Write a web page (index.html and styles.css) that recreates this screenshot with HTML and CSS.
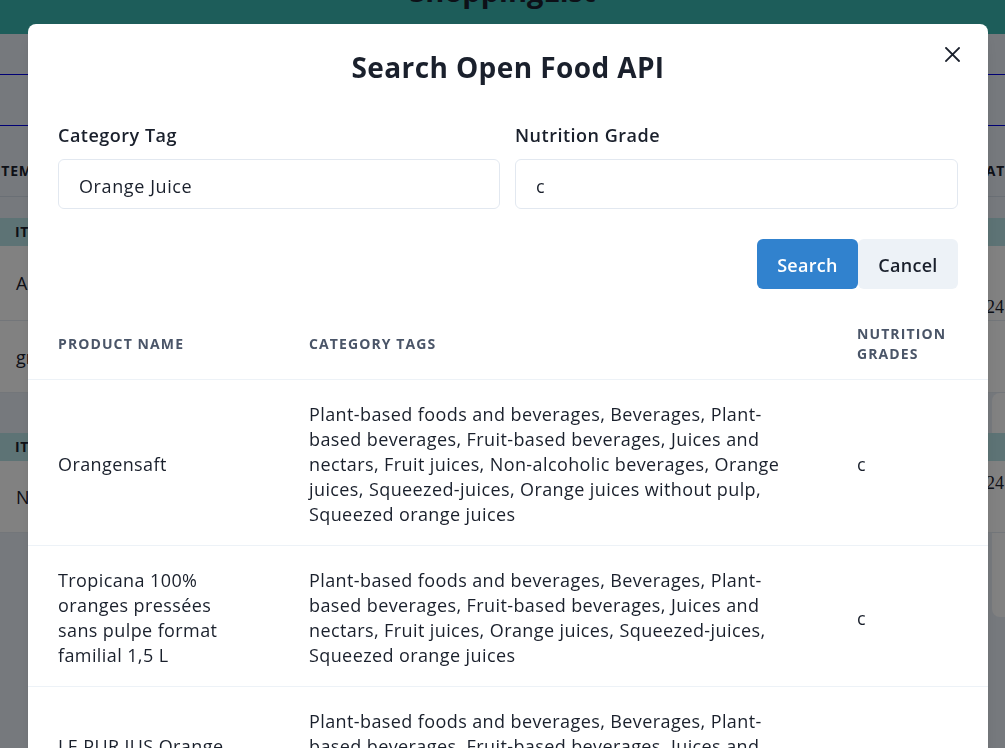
FILE: index.html
```html
<!DOCTYPE html>
<html lang="en">
<head>
<meta charset="utf-8">
<title>ShoppingList</title>
<link rel="stylesheet" href="styles.css">
</head>
<body>
<div class="page">
  <header class="topbar"><h1 class="brand">ShoppingList</h1></header>
  <div class="tabs"></div>
  <div class="toolbar"></div>
  <div class="side-card"></div>
  <div class="list">
    <div class="list-head"><span class="head-left">ITEM</span><span class="head-right">CREATED AT</span></div>
    <div class="group">
      <div class="group-title">ITEMS</div>
      <div class="row row-tall"><span>Apples</span><span class="date date-low">2024</span></div>
      <div class="row"><span>grapes</span><span class="date"></span></div>
    </div>
    <div class="group group-second">
      <div class="group-title">ITEMS</div>
      <div class="row"><span>Nuts</span><span class="date date-high">2024</span></div>
    </div>
  </div>
</div>

<div class="overlay"></div>

<section class="modal" role="dialog" aria-labelledby="modal-title">
  <header class="modal-header">
    <h2 class="modal-title" id="modal-title">Search Open Food API</h2>
    <button class="close" type="button" aria-label="Close">
      <svg width="15" height="15" viewBox="0 0 15 15" aria-hidden="true">
        <path d="M1 1 L14 14 M14 1 L1 14" stroke="#1a202c" stroke-width="1.8" stroke-linecap="square" fill="none"/>
      </svg>
    </button>
  </header>
  <div class="modal-body">
    <div class="fields">
      <div class="field">
        <label class="label" for="tag">Category Tag</label>
        <input class="input" id="tag" type="text" value="Orange Juice">
      </div>
      <div class="field">
        <label class="label" for="grade">Nutrition Grade</label>
        <input class="input" id="grade" type="text" value="c">
      </div>
    </div>
    <div class="actions">
      <button class="btn btn-primary" type="button">Search</button>
      <button class="btn btn-ghost" type="button">Cancel</button>
    </div>
  </div>
  <table class="results">
    <colgroup>
      <col class="c-name"><col class="c-tags"><col class="c-grade">
    </colgroup>
    <thead>
      <tr><th>Product Name</th><th>Category Tags</th><th>Nutrition Grades</th></tr>
    </thead>
    <tbody>
      <tr>
        <td>Orangensaft</td>
        <td>Plant-based foods and beverages, Beverages, Plant-based beverages, Fruit-based beverages, Juices and nectars, Fruit juices, Non-alcoholic beverages, Orange juices, Squeezed-juices, Orange juices without pulp, Squeezed orange juices</td>
        <td>c</td>
      </tr>
      <tr>
        <td>Tropicana 100% oranges pressées sans pulpe format familial 1,5 L</td>
        <td>Plant-based foods and beverages, Beverages, Plant-based beverages, Fruit-based beverages, Juices and nectars, Fruit juices, Orange juices, Squeezed-juices, Squeezed orange juices</td>
        <td>c</td>
      </tr>
      <tr>
        <td>LE PUR JUS Orange 100% pressé sans pulpe</td>
        <td>Plant-based foods and beverages, Beverages, Plant-based beverages, Fruit-based beverages, Juices and nectars, Fruit juices, Non-alcoholic beverages, Orange juices, Squeezed-juices, Orange juices without pulp, Squeezed orange juices</td>
        <td>c</td>
      </tr>
    </tbody>
  </table>
</section>
</body>
</html>
```

FILE: styles.css
```css
* { box-sizing: border-box; }

html, body {
  margin: 0;
  width: 1005px;
  height: 748px;
  overflow: hidden;
}

body {
  font-family: "Open Sans", "Noto Sans", sans-serif;
  color: #1a202c;
  background: #e2e8f0;
}

/* ---------- background page ---------- */
.page {
  position: relative;
  width: 1005px;
  height: 748px;
}

.topbar {
  height: 34px;
  background: #38b2ac;
  overflow: hidden;
  text-align: center;
}

.brand {
  margin: -29px 0 0;
  font-size: 29px;
  line-height: 40px;
  font-weight: 700;
  color: #1a202c;
}

.tabs {
  height: 41px;
  border-bottom: 1px solid #0000e0;
}

.toolbar {
  height: 51px;
  border-bottom: 1px solid #0000e0;
}

.list {
  position: relative;
  z-index: 1;
  width: 1030px;
}

.list-head {
  height: 71px;
  display: flex;
  justify-content: space-between;
  align-items: flex-end;
  padding: 0 0 16px;
  font-size: 14px;
  font-weight: 700;
  letter-spacing: 0.05em;
  color: #1a202c;
  border-bottom: 1px solid #cbd5e0;
}

.head-left { margin-left: -4px; }
.head-right { margin-right: 25px; }

.group { margin-top: 21px; }
.group-second { margin-top: 40px; }

.group-title {
  height: 28px;
  line-height: 28px;
  padding-left: 15px;
  background: #b2dde0;
  font-size: 14px;
  font-weight: 700;
  letter-spacing: 0.05em;
}

.row {
  height: 72px;
  display: flex;
  justify-content: space-between;
  align-items: center;
  padding-left: 16px;
  background: #f7f7f8;
  font-size: 18px;
  border-bottom: 1px solid #dde3ea;
}

.row-tall { height: 75px; }

.date {
  width: 62px;
  font-family: "Liberation Serif", serif;
  font-size: 18px;
}

.date-low { align-self: flex-end; padding-bottom: 2px; }
.date-high { align-self: flex-start; padding-top: 12px; }

.side-card {
  position: absolute;
  left: 992px;
  top: 393px;
  width: 40px;
  height: 224px;
  background: #f7f7f8;
  border-radius: 8px 0 0 8px;
}

/* ---------- overlay + modal ---------- */
.overlay {
  position: fixed;
  inset: 0;
  z-index: 2;
  background: rgba(0, 0, 0, 0.48);
}

.modal {
  position: fixed;
  z-index: 3;
  top: 24px;
  left: 28px;
  width: 960px;
  height: 760px;
  background: #ffffff;
  border-radius: 8px 8px 0 0;
  box-shadow: 0 10px 15px -3px rgba(0, 0, 0, 0.1), 0 4px 6px -2px rgba(0, 0, 0, 0.05);
  overflow: hidden;
}

.modal-header {
  position: relative;
  padding: 23px 30px 0;
  text-align: center;
}

.modal-title {
  margin: 0;
  font-size: 28px;
  line-height: 40px;
  font-weight: 700;
  letter-spacing: 0.4px;
  color: #1a202c;
}

.close {
  position: absolute;
  top: 14px;
  right: 20px;
  width: 32px;
  height: 32px;
  padding: 0;
  border: 0;
  border-radius: 6px;
  background: transparent;
  display: flex;
  align-items: center;
  justify-content: center;
}

.modal-body {
  padding: 36px 30px 0;
}

.fields {
  display: grid;
  grid-template-columns: 442px 443px;
  column-gap: 15px;
}

.label {
  display: block;
  margin-bottom: 12px;
  font-size: 18px;
  line-height: 24px;
  font-weight: 600;
  letter-spacing: 0.5px;
  color: #1a202c;
}

.input {
  display: block;
  width: 100%;
  height: 50px;
  padding: 3px 20px 0;
  border: 1px solid #e2e8f0;
  border-radius: 6px;
  background: #fff;
  font-family: inherit;
  font-size: 18px;
  letter-spacing: 0.6px;
  color: #1a202c;
}

.actions {
  display: flex;
  justify-content: flex-end;
  margin-top: 30px;
}

.btn {
  height: 50px;
  border: 0;
  border-radius: 6px;
  padding: 2px 0 0;
  font-family: inherit;
  font-size: 18px;
  font-weight: 600;
  letter-spacing: 0.3px;
}

.btn-primary {
  width: 101px;
  background: #3182ce;
  color: #ffffff;
}

.btn-ghost {
  width: 100px;
  background: #edf2f7;
  color: #1a202c;
}

.results {
  width: 960px;
  margin-top: 20px;
  table-layout: fixed;
  border-collapse: collapse;
}

.c-name { width: 251px; }
.c-tags { width: 548px; }
.c-grade { width: 161px; }

.results th {
  padding: 15px 30px;
  text-align: left;
  font-size: 14px;
  line-height: 20px;
  font-weight: 700;
  letter-spacing: 1.1px;
  text-transform: uppercase;
  color: #4a5568;
  border-bottom: 1px solid #edf2f7;
  vertical-align: middle;
}

.results td {
  padding: 22px 30px 18px;
  font-size: 18px;
  line-height: 25px;
  letter-spacing: 0.4px;
  color: #1a202c;
  border-bottom: 1px solid #edf2f7;
  vertical-align: middle;
}

.results td:first-child { padding-right: 40px; }
```
